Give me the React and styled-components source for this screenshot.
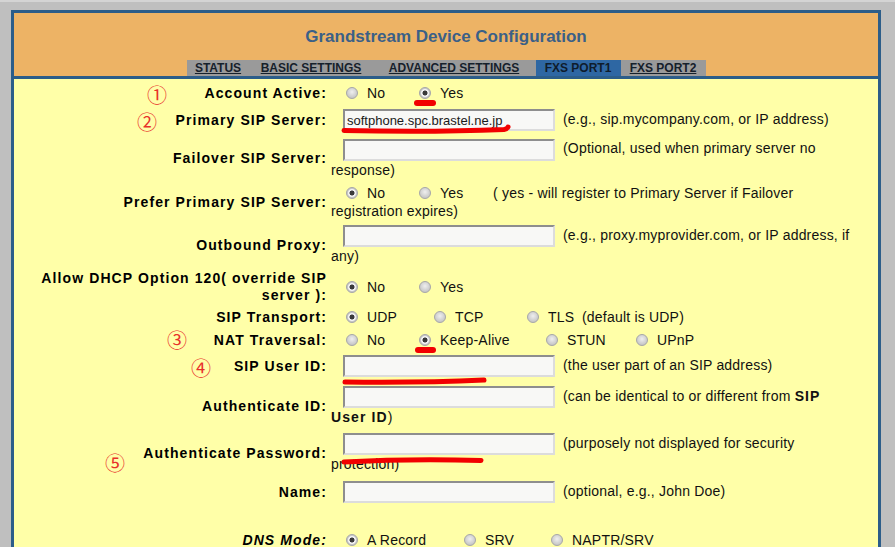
import React from 'react';
import styled, { createGlobalStyle } from 'styled-components';

const GlobalStyle = createGlobalStyle`
  html, body {
    margin: 0;
    padding: 0;
    background: #bfbfbf;
    font-family: "Liberation Sans", Arial, sans-serif;
    overflow: hidden;
  }
`;

const Page = styled.div`
  position: relative;
  height: 547px;
  border-top: 2px solid #d4d4d4;
  padding: 8px 0 0 11px;
  box-sizing: border-box;
  overflow: hidden;
`;

const Frame = styled.div`
  width: 870px;
  box-sizing: border-box;
  border: 3px solid #2c5d89;
  border-bottom: none;
  background: #ffffa8;
`;

const Header = styled.div`
  background: #edb365;
  border-bottom: 3px solid #2c5d89;
  height: 63px;
  display: flex;
  flex-direction: column;
  align-items: center;
`;

const Title = styled.h1`
  margin: 0;
  height: 47px;
  display: flex;
  align-items: center;
  font-size: 17px;
  font-weight: bold;
  color: #3b6087;
`;

const Nav = styled.div`
  display: flex;
  height: 16px;
  background: #9a9a9a;
`;

const Tab = styled.a`
  width: ${p => p.w}px;
  display: flex;
  align-items: center;
  justify-content: center;
  font-size: 12px;
  font-weight: bold;
  color: ${p => (p.active ? '#0e1c2c' : '#15202b')};
  background: ${p => (p.active ? '#2e67a3' : 'transparent')};
  text-decoration: ${p => (p.active ? 'none' : 'underline')};
  cursor: pointer;
`;

const Form = styled.table`
  border-collapse: collapse;
  margin-top: 2px;
  font-size: 14px;
`;

const Row = styled.tr`
  height: ${p => p.h}px;
`;

const Label = styled.td`
  width: 313px;
  padding: 0 4px 0 0;
  text-align: right;
  vertical-align: middle;
  line-height: 17px;
  font-weight: bold;
  font-style: ${p => (p.italic ? 'italic' : 'normal')};
  letter-spacing: 1.1px;
  color: #000;
`;

const Value = styled.td`
  width: 528px;
  padding: 0;
  text-indent: 12px;
  vertical-align: middle;
  line-height: 18px;
  letter-spacing: 0.2px;
  color: #111;

  b {
    letter-spacing: 1.1px;
  }
`;

const Field = styled.input`
  width: 212px;
  height: 22px;
  box-sizing: border-box;
  margin: 0;
  padding: 0 2px;
  text-indent: 0;
  vertical-align: middle;
  border: 2px solid;
  border-color: #8e8e8e #dcdcdc #dcdcdc #8e8e8e;
  background: #f8f8f6;
  font-family: "Liberation Sans", Arial, sans-serif;
  font-size: 13px;
  color: #1a1a1a;
  outline: none;
`;

const Note = styled.span`
  margin-left: 8px;
  text-indent: 0;
`;

const Option = styled.label`
  display: inline-flex;
  align-items: center;
  width: ${p => (p.w ? `${p.w}px` : 'auto')};
  margin-left: ${p => (p.first ? 3 : 0)}px;
  text-indent: 0;
  vertical-align: top;
`;

const Radio = styled.span`
  width: 12px;
  height: 12px;
  margin-right: 9px;
  border-radius: 50%;
  box-sizing: border-box;
  border: 1px solid #a8a8a8;
  background: ${p =>
    p.checked
      ? 'radial-gradient(circle, #3a3a3a 0 2.2px, #f2f2f2 2.8px 3.6px, #c9c9c9 4.4px)'
      : 'radial-gradient(circle at 50% 40%, #efefef 0, #c6c6c6 75%)'};
  flex: none;
`;

const Overlay = styled.svg`
  position: absolute;
  left: 0;
  top: 0;
  width: 895px;
  height: 547px;
  pointer-events: none;
`;

const Mark = styled.span`
  position: absolute;
  left: ${p => p.x}px;
  top: ${p => p.y}px;
  transform: translate(-50%, -50%);
  font-family: "Noto Sans CJK JP", sans-serif;
  font-size: 20px;
  line-height: 1;
  color: #e8302a;
  pointer-events: none;
`;

const Choice = ({ w, first, checked, children }) => (
  <Option w={w} first={first}>
    <Radio checked={checked} />
    {children}
  </Option>
);

const tabs = [
  { name: 'STATUS', w: 63 },
  { name: 'BASIC SETTINGS', w: 123 },
  { name: 'ADVANCED SETTINGS', w: 163 },
  { name: 'FXS PORT1', w: 85, active: true },
  { name: 'FXS PORT2', w: 85 },
];

const marks = [
  { t: '①', x: 157, y: 93 },
  { t: '②', x: 147, y: 120 },
  { t: '③', x: 177, y: 338 },
  { t: '④', x: 201, y: 366 },
  { t: '⑤', x: 115, y: 461 },
];

const App = () => {
  return (
    <>
      <GlobalStyle />
      <Page>
        <Frame>
          <Header>
            <Title>Grandstream Device Configuration</Title>
            <Nav>
              {tabs.map(t => (
                <Tab key={t.name} w={t.w} active={t.active}>{t.name}</Tab>
              ))}
            </Nav>
          </Header>

          <Form>
            <tbody>
              <Row h={24}>
                <Label>Account Active:</Label>
                <Value>
                  <Choice w={73} first>No</Choice>
                  <Choice checked>Yes</Choice>
                </Value>
              </Row>
              <Row h={30}>
                <Label>Primary SIP Server:</Label>
                <Value>
                  <Field readOnly defaultValue="softphone.spc.brastel.ne.jp" />
                  <Note>(e.g., sip.mycompany.com, or IP address)</Note>
                </Value>
              </Row>
              <Row h={47}>
                <Label>Failover SIP Server:</Label>
                <Value>
                  <Field readOnly />
                  <Note>(Optional, used when primary server no response)</Note>
                </Value>
              </Row>
              <Row h={40}>
                <Label>Prefer Primary SIP Server:</Label>
                <Value>
                  <Choice w={73} first checked>No</Choice>
                  <Choice w={74}>Yes</Choice>
                  ( yes - will register to Primary Server if Failover registration expires)
                </Value>
              </Row>
              <Row h={46}>
                <Label>Outbound Proxy:</Label>
                <Value>
                  <Field readOnly />
                  <Note>(e.g., proxy.myprovider.com, or IP address, if any)</Note>
                </Value>
              </Row>
              <Row h={38}>
                <Label>Allow DHCP Option 120( override SIP server ):</Label>
                <Value>
                  <Choice w={73} first checked>No</Choice>
                  <Choice>Yes</Choice>
                </Value>
              </Row>
              <Row h={22}>
                <Label>SIP Transport:</Label>
                <Value>
                  <Choice w={88} first checked>UDP</Choice>
                  <Choice w={93}>TCP</Choice>
                  <Choice w={55}>TLS</Choice>
                  (default is UDP)
                </Value>
              </Row>
              <Row h={24}>
                <Label>NAT Traversal:</Label>
                <Value>
                  <Choice w={73} first>No</Choice>
                  <Choice w={127} checked>Keep-Alive</Choice>
                  <Choice w={90}>STUN</Choice>
                  <Choice>UPnP</Choice>
                </Value>
              </Row>
              <Row h={28}>
                <Label>SIP User ID:</Label>
                <Value>
                  <Field readOnly />
                  <Note>(the user part of an SIP address)</Note>
                </Value>
              </Row>
              <Row h={52}>
                <Label>Authenticate ID:</Label>
                <Value>
                  <Field readOnly />
                  <Note>(can be identical to or different from <b>SIP User ID</b>)</Note>
                </Value>
              </Row>
              <Row h={42}>
                <Label>Authenticate Password:</Label>
                <Value>
                  <Field readOnly type="password" />
                  <Note>(purposely not displayed for security protection)</Note>
                </Value>
              </Row>
              <Row h={36}>
                <Label>Name:</Label>
                <Value>
                  <Field readOnly />
                  <Note>(optional, e.g., John Doe)</Note>
                </Value>
              </Row>
              <Row h={18}>
                <Label />
                <Value />
              </Row>
              <Row h={24}>
                <Label italic>DNS Mode:</Label>
                <Value>
                  <Choice w={118} first checked>A Record</Choice>
                  <Choice w={87}>SRV</Choice>
                  <Choice>NAPTR/SRV</Choice>
                </Value>
              </Row>
              <Row h={60}>
                <Label />
                <Value />
              </Row>
            </tbody>
          </Form>
        </Frame>

        <Overlay viewBox="0 0 895 547">
          <g fill="none" stroke="#f20000" strokeLinecap="round">
            <path d="M417 101 L433 101" strokeWidth="6" />
            <path d="M344 128.5 Q430 130.5 504 127.5 Q507 127 508 125" strokeWidth="5" />
            <path d="M418 348 L433 348" strokeWidth="6" />
            <path d="M345 380 Q420 381 484 378" strokeWidth="5" />
            <path d="M344 460 Q410 456.5 481 458.5" strokeWidth="5" />
          </g>
        </Overlay>
        {marks.map(m => (
          <Mark key={m.t} x={m.x} y={m.y}>{m.t}</Mark>
        ))}
      </Page>
    </>
  );
};

export default App;
